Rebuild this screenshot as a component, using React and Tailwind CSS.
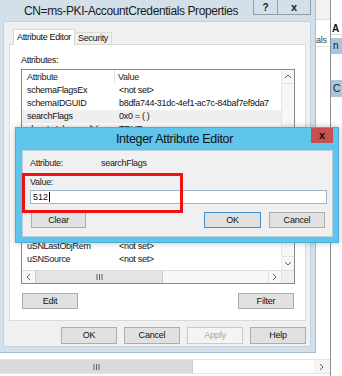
import React from 'react';

// rows 4..11 sit under the dialog; only their spacing matters
const rows = [
  ['schemaFlagsEx', '<not set>'],
  ['schemaIDGUID', 'b8dfa744-31dc-4ef1-ac7c-84baf7ef9da7'],
  ['searchFlags', '0x0 = ( )', true],
  ['showInAdvancedView', 'TRUE'],
  ['', ''],
  ['', ''],
  ['', ''],
  ['', ''],
  ['', ''],
  ['', ''],
  ['', ''],
  ['', ''],
  ['uSNLastObjRem', '<not set>'],
  ['uSNSource', '<not set>'],
];

const Chevron = ({ dir }) => {
  const pts = {
    up: '1,5 4,2 7,5',
    down: '1,2 4,5 7,2',
    left: '5,1 2,4 5,7',
    right: '2,1 5,4 2,7',
  }[dir];
  return (
    <svg width="8" height="8" viewBox="0 0 8 8">
      <polyline points={pts} fill="none" stroke="#606060" strokeWidth="1" />
    </svg>
  );
};

const Grip = () => (
  <svg width="7" height="6" viewBox="0 0 7 6">
    <path d="M1 0v6M3.5 0v6M6 0v6" stroke="#606060" strokeWidth="1" />
  </svg>
);

const Btn = ({ children, className = '', disabled, def }) => (
  <div
    className={`flex items-center justify-center border text-[9px] tracking-[-0.2px] leading-none ${
      disabled
        ? 'bg-[#f4f4f4] border-[#cacaca] text-[#a8a8a8]'
        : def
        ? 'bg-[#e1e1e1] border-[#3d8fd1] text-[#111]'
        : 'bg-[#e1e1e1] border-[#adadad] text-[#111]'
    } ${className}`}
  >
    {children}
  </div>
);

const AttributeList = () => (
  <div className="flex flex-col w-[274px] h-[215px] border border-[#828790] bg-white">
    <div className="flex h-[200px]">
      <div className="flex-1 flex flex-col overflow-hidden">
        <div className="flex h-[14px] shrink-0 items-center text-[9px] tracking-[-0.3px] leading-[14px] text-[#222]">
          <div className="w-[93px] pl-[5px] border-r border-[#e5e5e5] h-full">Attribute</div>
          <div className="pl-[3px]">Value</div>
        </div>
        {rows.map(([name, value, sel], i) => (
          <div
            key={i}
            className={`flex h-[13px] shrink-0 text-[9px] tracking-[-0.3px] leading-[13px] text-[#111] ${sel ? 'bg-[#efefef]' : ''}`}
          >
            <div className="w-[93px] pl-[5px] whitespace-nowrap overflow-hidden">{name}</div>
            <div className="pl-[4px] whitespace-nowrap">{value}</div>
          </div>
        ))}
      </div>
      <div className="w-[13px] flex flex-col justify-between bg-[#f7f7f7] border-l border-[#e6e6e6]">
        <div className="h-[14px] flex items-center justify-center border-b border-[#e2e2e2]">
          <Chevron dir="up" />
        </div>
        <div className="h-[14px] flex items-center justify-center border-t border-[#e2e2e2]">
          <Chevron dir="down" />
        </div>
      </div>
    </div>
    <div className="flex h-[13px] border-t border-[#dcdcdc]">
      <div className="flex-1 flex bg-[#f7f7f7]">
        <div className="w-[13px] flex items-center justify-center">
          <Chevron dir="left" />
        </div>
        <div className="w-[128px] flex items-center justify-center bg-[#e4e4e4] border-x border-[#cdcdcd]">
          <Grip />
        </div>
        <div className="flex-1" />
        <div className="w-[13px] flex items-center justify-center border-l border-[#e2e2e2]">
          <Chevron dir="right" />
        </div>
      </div>
      <div className="w-[13px] bg-[#efefef] border-l border-[#e2e2e2]" />
    </div>
  </div>
);

const PropertiesWindow = () => (
  <div className="absolute left-[-5px] top-0 w-[321px] h-[353px] flex flex-col bg-[#d3e0e9] border-r border-b border-[#a9bccb]">
    <div className="h-[21px] flex items-start justify-between shrink-0">
      <div className="pl-[29px] pt-[4px] whitespace-nowrap text-[12px] tracking-[-0.4px] leading-[15px] text-[#1b1b1b]">
        CN=ms-PKI-AccountCredentials Properties
      </div>
      <div className="flex mr-[4px]">
        <div className="w-[24px] h-[15px] flex items-center justify-center border-l border-b border-[#8d9ea9] text-[10px] font-bold text-[#222]">
          ?
        </div>
        <div className="w-[34px] h-[15px] flex items-center justify-center border-x border-b border-[#8d9ea9] text-[11px] font-bold leading-none text-[#222]">
          x
        </div>
      </div>
    </div>
    <div className="flex-1 ml-[8px] mr-[4px] mb-[5px] bg-[#f0f0f0] border border-[#c3d2dc] flex flex-col">
      <div className="flex items-end pl-[9px] pt-[6px] h-[22px]">
        <div className="relative z-10 -mb-px h-[16px] px-[3px] bg-white border-x border-t border-[#d9d9d9] whitespace-nowrap text-[9px] tracking-[-0.35px] leading-[14px] text-[#111]">
          Attribute Editor
        </div>
        <div className="h-[12px] px-[3px] border-r border-t border-[#d9d9d9] whitespace-nowrap text-[9px] tracking-[-0.3px] leading-[11px] text-[#111]">
          Security
        </div>
      </div>
      <div className="ml-[5px] mr-[4px] h-[277px] bg-white border border-[#d9d9d9] flex flex-col pl-[11px] pt-[9px]">
        <div className="text-[9px] tracking-[-0.3px] leading-[12px] text-[#111]">Attributes:</div>
        <div className="mt-[3px]">
          <AttributeList />
        </div>
        <div className="mt-[9px] flex justify-between w-[274px] px-[1px]">
          <Btn className="w-[56px] h-[16px]">Edit</Btn>
          <Btn className="w-[56px] h-[16px]">Filter</Btn>
        </div>
      </div>
      <div className="mt-[6px] flex justify-end gap-[7px] pr-[4px]">
        <Btn className="w-[56px] h-[17px]">OK</Btn>
        <Btn className="w-[56px] h-[17px]">Cancel</Btn>
        <Btn className="w-[56px] h-[17px]" disabled>Apply</Btn>
        <Btn className="w-[56px] h-[17px]">Help</Btn>
      </div>
    </div>
  </div>
);

const IntegerEditor = () => (
  <div className="absolute left-[15px] top-[127px] w-[324px] h-[116px] flex flex-col bg-[#5fc5eb] border border-[#4aaed6] shadow-[0_0_6px_rgba(0,0,0,0.25)]">
    <div className="h-[22px] shrink-0 flex items-start">
      <div className="flex-1 text-center pl-[22px] pt-[4px] whitespace-nowrap text-[12.5px] tracking-[-0.3px] leading-[15px] text-[#111]">
        Integer Attribute Editor
      </div>
      <div className="w-[22px] h-[15px] mr-[5px] bg-[#c75050] flex items-center justify-center text-[11px] font-bold leading-none text-[#111]">
        x
      </div>
    </div>
    <div className="relative flex-1 ml-[6px] mr-[5px] mb-[5px] bg-[#f0f0f0] border border-[#b9cfdc] flex flex-col">
      <div className="flex pl-[7px] pt-[6px] text-[9px] tracking-[-0.3px] leading-[12px] text-[#222]">
        <div className="w-[71px]">Attribute:</div>
        <div>searchFlags</div>
      </div>
      <div className="pl-[7px] mt-[7px] text-[9px] tracking-[-0.3px] leading-[12px] text-[#222]">Value:</div>
      <div className="ml-[7px] mr-[5px] mt-[2px] h-[14px] bg-white border border-[#9fb7c9] flex items-center pl-[2px] text-[9px] leading-none text-[#111]">
        512<span className="w-px h-[10px] bg-black ml-px" />
      </div>
      <div className="mt-[8px] flex pl-[8px] pr-[7px]">
        <Btn className="w-[55px] h-[16px]">Clear</Btn>
        <div className="flex-1" />
        <Btn className="w-[57px] h-[16px]" def>OK</Btn>
        <Btn className="w-[56px] h-[16px] ml-[8px]">Cancel</Btn>
      </div>
      <div className="absolute left-[-1px] top-[22px] w-[161px] h-[40px] border-[3px] border-[#ee1111]" />
    </div>
  </div>
);

const Background = () => (
  <div className="absolute inset-0 flex bg-white">
    <div className="w-[330px] flex flex-col">
      <div className="flex-1 flex">
        <div className="w-[316px]" />
        <div className="flex-1 flex flex-col">
          <div className="h-[20px] bg-[#f2f2f2] border-b border-[#dedede]" />
          <div className="mt-[15px] h-[12px] border-b border-[#e3e3e3] text-[9px] tracking-[-0.3px] leading-[11px] text-[#444] overflow-hidden whitespace-nowrap">
            als
          </div>
        </div>
      </div>
      <div className="h-[6px]" />
      <div className="h-[15px] flex bg-[#f4f4f4] border-y border-[#e3e3e3] mb-[2px]">
        <div className="w-[193px] flex items-center justify-center bg-[#dadada] border-r border-[#cdcdcd]">
          <Grip />
        </div>
        <div className="flex-1 bg-white" />
        <div className="w-[16px] flex items-center justify-center">
          <Chevron dir="right" />
        </div>
      </div>
    </div>
    <div className="w-px bg-[#8f8f8f]" />
    <div className="flex-1 flex flex-col pt-[22px] overflow-hidden text-[10px] text-[#111]">
      <div className="h-[13px] pl-[1px] font-bold leading-[13px] border-b border-[#d8d8d8]">A</div>
      <div className="mt-[3px] h-[16px] bg-[#aac6dd] pl-[2px] leading-[16px]">n</div>
      <div className="mt-[26px] h-[17px] bg-[#aac6dd] pl-[2px] leading-[17px]">C</div>
    </div>
  </div>
);

export default function App() {
  return (
    <div className="relative w-[342px] h-[376px] overflow-hidden bg-white font-['Liberation_Sans',Arial,sans-serif]">
      <Background />
      <PropertiesWindow />
      <IntegerEditor />
    </div>
  );
}
